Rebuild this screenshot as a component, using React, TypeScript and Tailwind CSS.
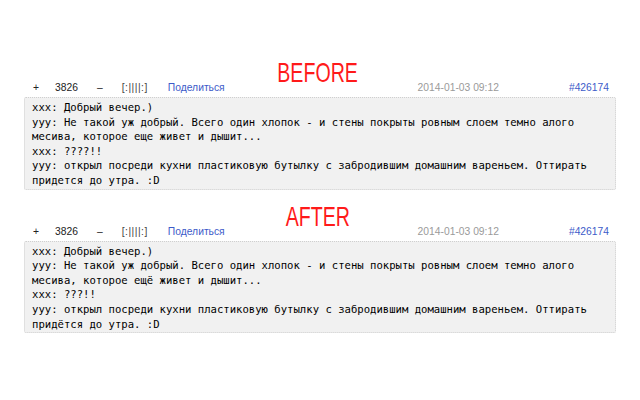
const before = [
  "xxx: Добрый вечер.)",
  "yyy: Не такой уж добрый. Всего один хлопок - и стены покрыты ровным слоем темно алого",
  "месива, которое еще живет и дышит...",
  "xxx: ????!!",
  "yyy: открыл посреди кухни пластиковую бутылку с забродившим домашним вареньем. Оттирать",
  "придется до утра. :D",
];

const after = [
  "xxx: Добрый вечер.)",
  "yyy: Не такой уж добрый. Всего один хлопок - и стены покрыты ровным слоем темно алого",
  "месива, которое ещё живет и дышит...",
  "xxx: ???!!",
  "yyy: открыл посреди кухни пластиковую бутылку с забродившим домашним вареньем. Оттирать",
  "придётся до утра. :D",
];

function Quote({ title, lines }: { title: string; lines: string[] }) {
  return (
    <section>
      <div className="h-[20px] flex justify-center pr-[5px]">
        <span className="inline-block scale-x-[0.7] text-[28px] leading-[20px] text-[#ff1a1a] font-['Liberation_Sans',sans-serif]">
          {title}
        </span>
      </div>
      <div className="-mt-[2px] h-[14px] flex items-center text-[10.3px] leading-[14px] font-['Liberation_Sans',Arial,sans-serif] text-[#222]">
        <span className="ml-[9px]">+</span>
        <span className="ml-[16px]">3826</span>
        <span className="ml-[19px]">–</span>
        <span className="ml-[19px] text-[#444] tracking-[0.5px]">[:||||:]</span>
        <span className="ml-[20px] text-[#3d5bc9]">Поделиться</span>
        <span className="ml-auto text-[#9a9a9a]">2014-01-03 09:12</span>
        <span className="ml-[70px] mr-[7px] text-[#3d5bc9]">#426174</span>
      </div>
      <div className="mt-[2px] bg-[#f1f1f1] border border-dotted border-[#cfcfcf] rounded-[2px] pl-[7px] pt-[2px] pb-[1px] font-['DejaVu_Sans_Mono',monospace] text-[10.6px] leading-[14.6px] text-black">
        {lines.map((l, i) => (
          <div key={i} className="whitespace-pre">{l}</div>
        ))}
      </div>
    </section>
  );
}

export default function App() {
  return (
    <div className="w-[640px] h-[400px] bg-white px-[24px] pt-[63px] flex flex-col gap-[17px]">
      <Quote title="BEFORE" lines={before} />
      <Quote title="AFTER" lines={after} />
    </div>
  );
}
